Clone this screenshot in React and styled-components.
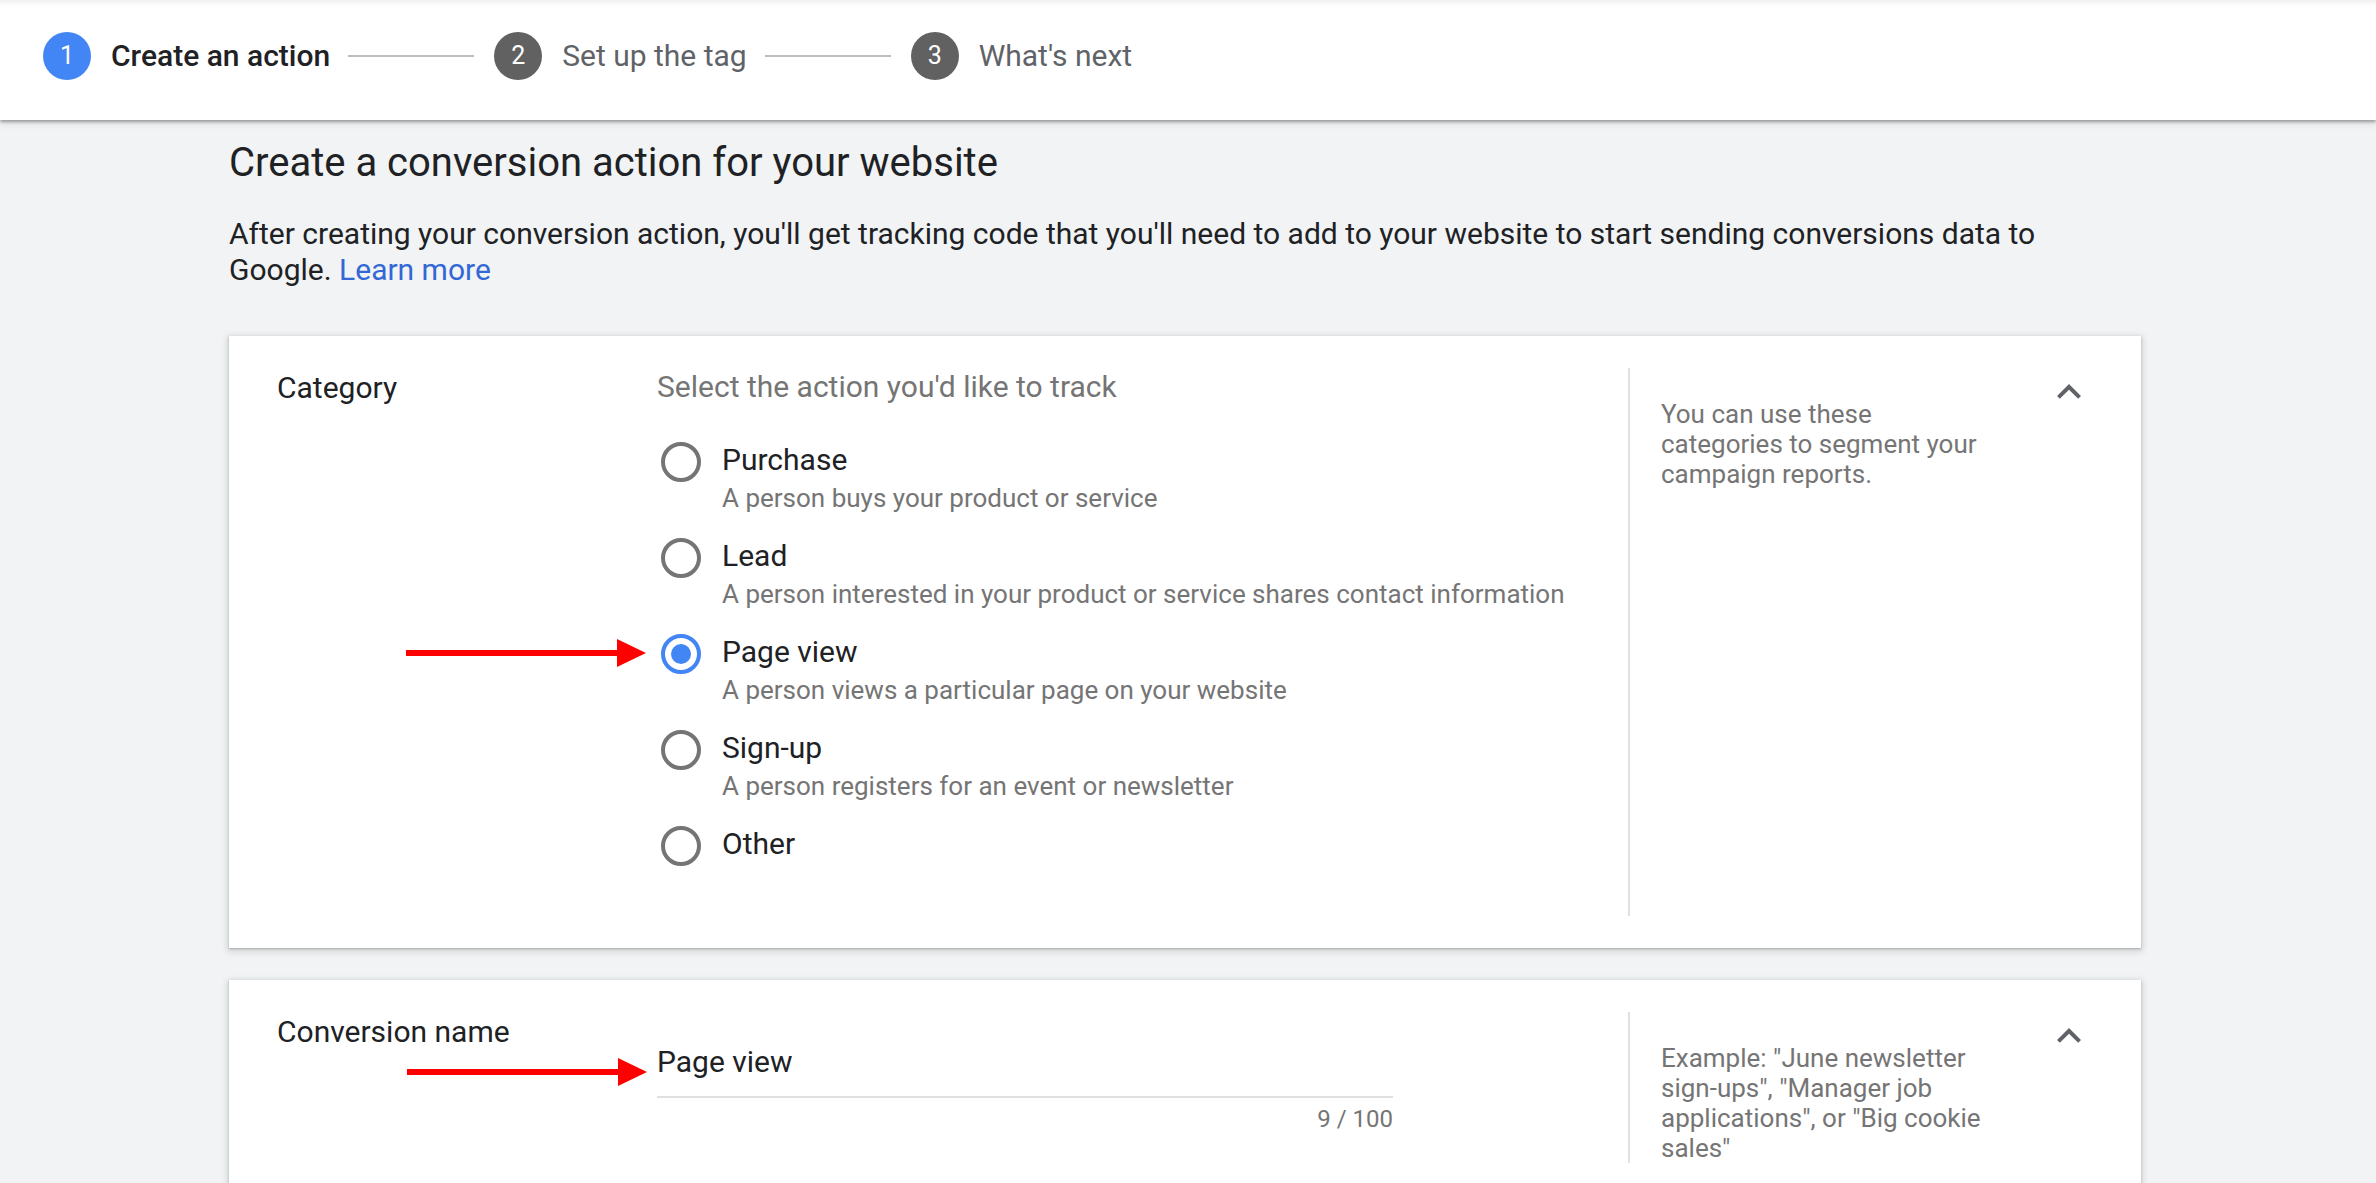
import styled, { createGlobalStyle } from "styled-components";

const GlobalStyle = createGlobalStyle`
  html, body {
    margin: 0;
    padding: 0;
    background: #f1f3f4;
    font-family: Roboto, "Liberation Sans", Arial, sans-serif;
    color: #202124;
  }
`;

const colors = {
  text: "#202124",
  grey: "#5f6368",
  light: "#757575",
  blue: "#4285f4",
  link: "#3367d6",
  line: "#e0e0e0",
  red: "#fe0000",
};

const Header = styled.header`
  position: relative;
  z-index: 2;
  height: 120px;
  box-sizing: border-box;
  background: #fff;
  display: flex;
  align-items: center;
  padding: 0 0 9px 43px;
  box-shadow: inset 0 7px 6px -5px rgba(0, 0, 0, 0.08),
    0 2px 3px rgba(0, 0, 0, 0.32), 0 4px 8px rgba(0, 0, 0, 0.08);
`;

const Step = styled.div`
  display: flex;
  align-items: center;
`;

const StepNum = styled.span`
  width: 48px;
  height: 48px;
  border-radius: 50%;
  background: ${(p) => (p.active ? colors.blue : "#616161")};
  color: #fff;
  font-size: 25px;
  display: flex;
  align-items: center;
  justify-content: center;
  margin-right: 20px;
`;

const StepLabel = styled.span`
  font-size: 30px;
  font-weight: ${(p) => (p.active ? 500 : 400)};
  color: ${(p) => (p.active ? colors.text : colors.grey)};
`;

const Connector = styled.span`
  width: 126px;
  height: 2px;
  background: #bdbdbd;
  margin: 0 20px 0 18px;
`;

const Main = styled.main`
  width: 1912px;
  margin-left: 229px;
  padding-bottom: 40px;
`;

const Title = styled.h1`
  margin: 19px 0 0;
  font-size: 40px;
  line-height: 48px;
  font-weight: 400;
  color: ${colors.text};
`;

const Intro = styled.p`
  margin: 29px 0 48px;
  font-size: 30px;
  line-height: 36px;
  color: ${colors.text};

  & a {
    color: ${colors.link};
    text-decoration: none;
  }
`;

const Card = styled.section`
  position: relative;
  background: #fff;
  display: flex;
  padding: 32px 48px;
  margin-bottom: 32px;
  box-shadow: 0 1px 2px rgba(60, 64, 67, 0.3),
    0 2px 6px 2px rgba(60, 64, 67, 0.15);
`;

const Label = styled.div`
  width: 380px;
  flex-shrink: 0;
  font-size: 30px;
  line-height: 40px;
  color: ${colors.text};
`;

const Body = styled.div`
  flex: 1;
`;

const Prompt = styled.div`
  font-size: 30px;
  line-height: 38px;
  color: ${colors.light};
  margin-bottom: 34px;
`;

const Options = styled.div`
  padding-bottom: 30px;
`;

const Option = styled.div`
  display: flex;
  align-items: flex-start;
  margin-bottom: 20px;
`;

const Radio = styled.span`
  box-sizing: border-box;
  flex-shrink: 0;
  width: 40px;
  height: 40px;
  margin: 2px 21px 0 4px;
  border-radius: 50%;
  border: 4px solid ${(p) => (p.checked ? colors.blue : "#757575")};
  display: flex;
  align-items: center;
  justify-content: center;

  &::after {
    content: "";
    width: 20px;
    height: 20px;
    border-radius: 50%;
    background: ${colors.blue};
    display: ${(p) => (p.checked ? "block" : "none")};
  }
`;

const OptionName = styled.div`
  font-size: 30px;
  line-height: 40px;
  color: ${colors.text};
`;

const OptionDesc = styled.div`
  font-size: 26px;
  line-height: 36px;
  color: ${colors.light};
`;

const Field = styled.div`
  width: 736px;
  padding-top: 30px;
`;

const FieldValue = styled.div`
  font-size: 30px;
  line-height: 40px;
  color: ${colors.text};
  padding-bottom: 14px;
  border-bottom: 2px solid ${colors.line};
`;

const Counter = styled.div`
  text-align: right;
  font-size: 24px;
  line-height: 32px;
  margin-top: 5px;
  color: ${colors.light};
`;

const Help = styled.aside`
  width: 465px;
  flex-shrink: 0;
  box-sizing: border-box;
  border-left: 2px solid ${colors.line};
  padding-left: 31px;
  display: flex;
  justify-content: space-between;
  align-items: flex-start;
`;

const HelpText = styled.p`
  width: 322px;
  margin: 31px 0 0;
  font-size: 26px;
  line-height: 30px;
  color: ${colors.light};
`;

const Toggle = styled.button`
  width: 48px;
  height: 48px;
  padding: 0;
  border: 0;
  background: none;
  cursor: pointer;

  & svg {
    display: block;
  }
`;

const ArrowMark = styled.svg`
  position: absolute;
  left: ${(p) => p.x}px;
  top: ${(p) => p.y}px;
`;

function Arrow({ x, y }) {
  return (
    <ArrowMark x={x} y={y} width="240" height="30" viewBox="0 0 240 30">
      <rect x="0" y="12" width="214" height="6" fill={colors.red} />
      <polygon points="211,1 240,15 211,29" fill={colors.red} />
    </ArrowMark>
  );
}

function ChevronUp() {
  return (
    <Toggle aria-label="Collapse">
      <svg width="48" height="48" viewBox="0 0 24 24">
        <path
          d="M12 8l-6 6 1.41 1.41L12 10.83l4.59 4.58L18 14z"
          fill={colors.grey}
        />
      </svg>
    </Toggle>
  );
}

const steps = [
  { n: 1, label: "Create an action", active: true },
  { n: 2, label: "Set up the tag" },
  { n: 3, label: "What's next" },
];

const categories = [
  { name: "Purchase", desc: "A person buys your product or service" },
  {
    name: "Lead",
    desc: "A person interested in your product or service shares contact information",
  },
  {
    name: "Page view",
    desc: "A person views a particular page on your website",
    checked: true,
  },
  { name: "Sign-up", desc: "A person registers for an event or newsletter" },
  { name: "Other" },
];

export default function App() {
  return (
    <>
      <GlobalStyle />
      <Header>
        {steps.map((s, i) => (
          <Step key={s.n}>
            {i > 0 && <Connector />}
            <StepNum active={s.active}>{s.n}</StepNum>
            <StepLabel active={s.active}>{s.label}</StepLabel>
          </Step>
        ))}
      </Header>

      <Main>
        <Title>Create a conversion action for your website</Title>
        <Intro>
          After creating your conversion action, you'll get tracking code that
          you'll need to add to your website to start sending conversions data
          to Google. <a href="#">Learn more</a>
        </Intro>

        <Card>
          <Label>Category</Label>
          <Body>
            <Prompt>Select the action you'd like to track</Prompt>
            <Options>
              {categories.map((c) => (
                <Option key={c.name}>
                  <Radio checked={c.checked} />
                  <div>
                    <OptionName>{c.name}</OptionName>
                    {c.desc && <OptionDesc>{c.desc}</OptionDesc>}
                  </div>
                </Option>
              ))}
            </Options>
          </Body>
          <Help>
            <HelpText>
              You can use these categories to segment your campaign reports.
            </HelpText>
            <ChevronUp />
          </Help>
          <Arrow x={177} y={302} />
        </Card>

        <Card>
          <Label>Conversion name</Label>
          <Body>
            <Field>
              <FieldValue>Page view</FieldValue>
              <Counter>9 / 100</Counter>
            </Field>
          </Body>
          <Help>
            <HelpText>
              Example: "June newsletter sign-ups", "Manager job applications",
              or "Big cookie sales"
            </HelpText>
            <ChevronUp />
          </Help>
          <Arrow x={178} y={77} />
        </Card>
      </Main>
    </>
  );
}
